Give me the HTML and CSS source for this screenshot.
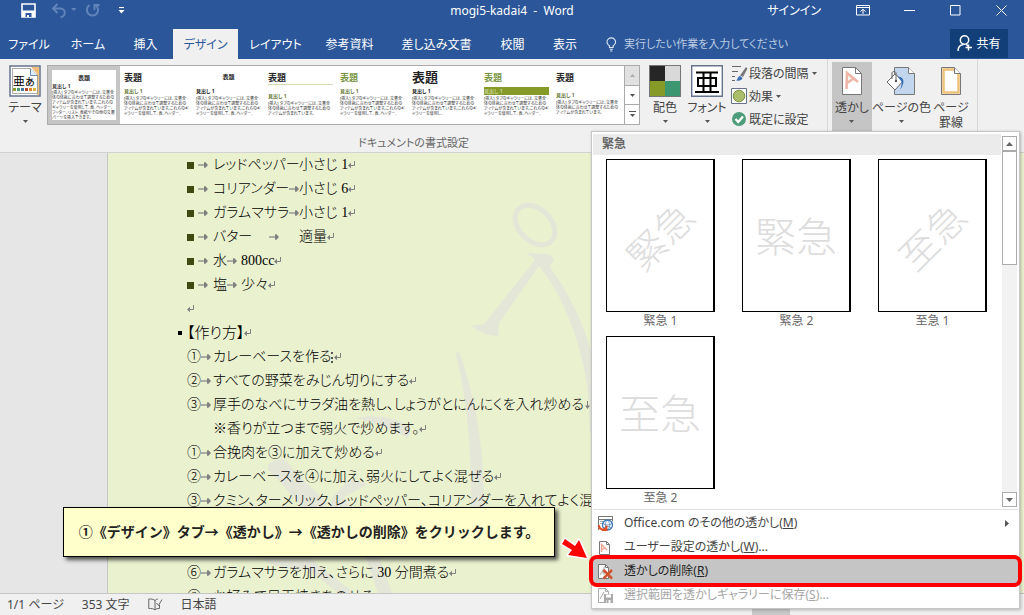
FILE: index.html
```html
<!DOCTYPE html>
<html lang="ja">
<head>
<meta charset="utf-8">
<title>mogi5-kadai4 - Word</title>
<link rel="stylesheet" href="styles.css">
</head>
<body>
<svg class="defs" aria-hidden="true">
  <symbol id="tab" viewBox="0 0 10 8"><path d="M0 4h6" stroke="#808080" stroke-width="1.2" fill="none"/><path d="M6 1.3h1.5L10 4 7.500 6.700H6z" fill="#808080"/></symbol>
  <symbol id="ret" viewBox="0 0 8 10"><path d="M6.500 1v4.500H2" stroke="#808080" fill="none"/><path d="M0 5.500 3 2.800v5.400z" fill="#808080"/></symbol>
  <symbol id="down" viewBox="0 0 8 10"><path d="M3.500 1v6" stroke="#808080" fill="none"/><path d="M1 5.500h5L3.500 9z" fill="#808080"/></symbol>
  <symbol id="caret" viewBox="0 0 5 3"><path d="M0 0h5L2.500 3z" fill="#555"/></symbol>
</svg>
<div class="app">
  <header class="titlebar">
    <div class="quick">
      <button class="ib" aria-label="上書き保存"><svg width="15" height="15" viewBox="0 0 15 15"><path d="M1 1h13v13H1z" fill="none" stroke="#fff" stroke-width="1.600"/><path d="M1 7.500h13V14H1z" fill="#fff"/><path d="M4.500 10h6v4h-6z" fill="#2b579a"/><path d="M6 12h2v2H6z" fill="#fff"/></svg></button>
      <button class="ib undo" aria-label="元に戻す"><svg width="26" height="15" viewBox="0 0 26 15"><path d="M6.500 1 2 5.500 6.500 10M2 5.500h7.500a4 4 0 0 1 0 8.500" fill="none" stroke="#6184bb" stroke-width="2"/><path d="M20 5h5.500l-2.700 3z" fill="#6184bb"/></svg></button>
      <button class="ib" aria-label="やり直し"><svg width="15" height="15" viewBox="0 0 15 15"><path d="M10.500 2.200A5.600 5.600 0 1 1 4.500 2.200M9.500 7V2h5" fill="none" stroke="#6184bb" stroke-width="2"/></svg></button>
      <button class="ib more" aria-label="カスタマイズ"><svg width="7" height="8" viewBox="0 0 7 8"><path d="M1 .500h5" stroke="#fff" stroke-width="1.200"/><path d="M.500 3h6L3.500 6.500z" fill="#fff"/></svg></button>
    </div>
    <h1 class="title">mogi5-kadai4&nbsp; -&nbsp; Word</h1>
    <div class="winctl">
      <button class="signin">サインイン</button>
      <button class="wb" aria-label="リボンの表示オプション"><svg width="14" height="11" viewBox="0 0 14 11"><path d="M.500.500h13v9.500H.500zM.500 2.500h13M7 9V4.500M4.500 6.500 7 4.300l2.500 2.200" fill="none" stroke="#fff"/></svg></button>
      <button class="wb" aria-label="最小化"><svg width="11" height="11" viewBox="0 0 11 11"><path d="M0 5.500h11" stroke="#fff"/></svg></button>
      <button class="wb" aria-label="最大化"><svg width="11" height="11" viewBox="0 0 11 11"><path d="M.500.500h9.500v9.500H.500z" fill="none" stroke="#fff"/></svg></button>
      <button class="wb" aria-label="閉じる"><svg width="11" height="11" viewBox="0 0 11 11"><path d="m.500.500 10 10m0-10-10 10" stroke="#fff"/></svg></button>
    </div>
  </header>

  <nav class="tabs">
    <button class="tab">ファイル</button>
    <button class="tab">ホーム</button>
    <button class="tab">挿入</button>
    <button class="tab active">デザイン</button>
    <button class="tab">レイアウト</button>
    <button class="tab">参考資料</button>
    <button class="tab">差し込み文書</button>
    <button class="tab">校閲</button>
    <button class="tab">表示</button>
    <label class="tell"><svg width="11" height="15" viewBox="0 0 11 15"><path d="M3.500 10.500V9C1.800 7.800 1 6.700 1 5.200a4.300 4.300 0 0 1 8.600 0C9.600 6.700 8.800 7.800 7.100 9v1.500zM3.800 12.200h3M4.200 14h2.200" fill="none" stroke="#dfe8f5" stroke-width="1.100"/></svg><input type="text" aria-label="操作アシスト" placeholder="実行したい作業を入力してください"></label>
    <button class="share"><svg width="16" height="17" viewBox="0 0 16 17"><circle cx="7.500" cy="5" r="4.200" fill="none" stroke="#fff" stroke-width="1.500"/><path d="M1 16c0-4 2-6 5.500-6.500M9 9.500c1.200.400 1.500.700 2 1.500M11.500 9.500v6M8.500 12.500h6.500" fill="none" stroke="#fff" stroke-width="1.500"/></svg>共有</button>
  </nav>

  <section class="ribbon">
    <div class="group fmt">
      <div class="tools">
        <button class="big theme"><svg width="32" height="32" viewBox="0 0 32 32"><path d="M1 1h30v30H1z" fill="#fff" stroke="#66738c" stroke-width="1.500"/><path d="M22 2h8v28h-2V9z" fill="#f0c078"/><path d="M3.500 3.500h18l7 7v18h-25z" fill="#fff" stroke="#888" stroke-width=".700"/><path d="M21.500 3.500v7h7" fill="#e2eefa" stroke="#6c8db8"/><text x="4" y="21" class="themetext">亜ぁ</text><path d="M4 23h3v3H4z" fill="#8a9c2c"/><path d="M8 23h3v3H8z" fill="#4a9a74"/><path d="M12 23h3v3h-3z" fill="#4675a8"/><path d="M16 23h3v3h-3z" fill="#b44a35"/><path d="M20 23h3v3h-3z" fill="#e08a28"/><path d="M24 23h3v3h-3z" fill="#dcb53d"/></svg><span>テーマ</span><svg class="car"><use href="#caret"/></svg></button>
        <div class="gallery">
          <button class="th sel"><span class="sheet"><b class="t center">表題</b><b class="h plain">見出し 1</b><span class="p">[挿入] タブのギャラリーには、文書全体の体裁に合わせて調整するためのアイテムが含まれています。これらのギャラリーを使用して、表、ヘッダー、フッター、リスト、表紙やその他の文書パーツを挿入できます。</span></span></button>
          <button class="th"><b class="t">表題</b><b class="h">見出し 1</b><span class="p">[挿入] タブのギャラリーには、文書全体の体裁に合わせて調整するためのアイテムが含まれています。これらのギャラリーを使用して、表、ヘッダー、</span></button>
          <button class="th"><b class="t small center">表題</b><b class="h black">見出し 1</b><span class="p">[挿入] タブのギャラリーには、文書全体の体裁に合わせて調整するためのアイテムが含まれています。これらのギャラリーを使用して、表、ヘッダー、</span></button>
          <button class="th"><b class="t ruled">表題</b><b class="h low">見出し 1</b><span class="p">[挿入] タブのギャラリーには、文書全体の体裁に合わせて調整するためのアイテムが含まれています。</span></button>
          <button class="th"><b class="t green">表題</b><b class="h">見出し 1</b><span class="p">[挿入] タブのギャラリーには、文書全体の体裁に合わせて調整するためのアイテムが含まれています。これらのギャラリーを使用して、表、ヘッダー、</span></button>
          <button class="th"><b class="t large">表題</b><b class="h black">見出し 1</b><span class="p">[挿入] タブのギャラリーには、文書全体の体裁に合わせて調整するためのアイテムが含まれています。これらのギャラリーを使用し、</span></button>
          <button class="th"><b class="t green">表題</b><b class="h band">見出し 1</b><span class="p">[挿入] タブのギャラリーには、文書全体の体裁に合わせて調整するためのアイテムが含まれています。これらのギャラリーを使用して、表、ヘッダー、</span></button>
          <button class="th"><b class="t">表題</b><b class="h low">見出し 1</b><span class="p">[挿入] タブのギャラリーには、文書全体の体裁に合わせて調整するためのアイテムが含まれています。</span></button>
          <div class="spin">
            <button class="off" aria-label="上へ"><svg width="5" height="3" viewBox="0 0 5 3"><path d="M0 3h5L2.500 0z" fill="#aaa"/></svg></button>
            <button aria-label="下へ"><svg class="car"><use href="#caret"/></svg></button>
            <button aria-label="その他"><svg width="7" height="7" viewBox="0 0 7 7"><path d="M0 .500h7" stroke="#555"/><path d="M1 3h5L3.500 6z" fill="#555"/></svg></button>
          </div>
        </div>
        <button class="big"><svg width="32" height="32" viewBox="0 0 32 32"><path d="M0 0h32v32H0z" fill="#777"/><path d="M1 1h15v15H1z" fill="#262626"/><path d="M16 1h15v15H16z" fill="#d9d9d9"/><path d="M1 16h15v15H1z" fill="#859a27"/><path d="M16 16h15v15H16z" fill="#3c9770"/></svg><span>配色</span><svg class="car"><use href="#caret"/></svg></button>
        <button class="big font"><svg width="32" height="32" viewBox="0 0 32 32"><path d="M.700.700h30.600v30.600H.700z" fill="#fff" stroke="#66738c" stroke-width="1.400"/><path d="M5 7.500h22M4 27h24M12.500 8v19M19.500 8v19M7 13h18v8H7z" fill="none" stroke="#000" stroke-width="2"/></svg><span>フォント</span><svg class="car"><use href="#caret"/></svg></button>
        <div class="stack">
          <button class="row"><svg width="17" height="17" viewBox="0 0 17 17"><path d="M1 1.500h9M1 6.500h6M1 11.500h3M1 15.500h3" stroke="#666"/><path d="M9 10.500 15 2l1.500 1.500L12 12z" fill="#777"/><path d="M5 15.500c2-1 1.500-4 4-4.500l2.500 2c0 2-3 3-6.500 2.500z" fill="#3a6fb5"/></svg><span>段落の間隔</span><svg class="car"><use href="#caret"/></svg></button>
          <button class="row"><svg width="17" height="17" viewBox="0 0 17 17"><path d="M.500.500h15v15H.500z" fill="#fff" stroke="#66738c"/><circle cx="8" cy="8" r="5.800" fill="#a8bf6c" stroke="#7f9643"/></svg><span>効果</span><svg class="car"><use href="#caret"/></svg></button>
          <button class="row"><svg width="17" height="17" viewBox="0 0 17 17"><circle cx="8" cy="8" r="7" fill="#4d9c7c"/><path d="m4.500 8 2.700 3L12 5.500" fill="none" stroke="#fff" stroke-width="2.200"/></svg><span>既定に設定</span></button>
        </div>
      </div>
      <div class="glabel">ドキュメントの書式設定</div>
    </div>
    <div class="group bgs">
      <button class="big pressed"><svg width="32" height="32" viewBox="0 0 32 32"><path d="M6.500 2.500h13l6 6v21h-19z" fill="#fff" stroke="#777"/><path d="M19.500 2.500v6h6" fill="none" stroke="#777"/><path d="M10.500 24 11 8l11 9M11 18l6-4" fill="none" stroke="#efb5a6" stroke-width="2.600"/></svg><span>透かし</span><svg class="car"><use href="#caret"/></svg></button>
      <button class="big wide"><svg width="32" height="32" viewBox="0 0 32 32"><path d="M9.500 2.500h14l6 6v21h-20z" fill="#c2d7ee" stroke="#777"/><path d="M23.500 2.500v6h6" fill="#fff" stroke="#777"/><path d="M2 17 10 9l8 7-8 9z" fill="#fff" stroke="#666"/><path d="M7 14V8c0-2 4-2 4 0v8" fill="none" stroke="#666"/><circle cx="11" cy="16" r="1.200" fill="#555"/><path d="M13 12c4-1 9 4 2 13 2-5 2-8 1-9z" fill="#3b71b4"/></svg><span>ページの色</span><svg class="car"><use href="#caret"/></svg></button>
      <button class="big"><svg width="32" height="32" viewBox="0 0 32 32"><path d="M6.500 2.500h13l6 6v21h-19z" fill="#fff" stroke="#777"/><path d="M19 4.500H8.500v23h15V9" fill="none" stroke="#edc27a" stroke-width="2.500"/><path d="M19.500 2.500v6h6" fill="#fff" stroke="#777"/></svg><span>ページ<br>罫線</span></button>
    </div>
  </section>

  <main class="doc">
    <article class="page">
      <svg class="mark" width="484" height="440" viewBox="108 153 484 440" aria-hidden="true">
        <g fill="#e4e7d8">
          <path d="M526 253l21 1q5 1 7 5l-4 8c18 24 34 57 42 88v80c-4-4-2-20-4-42-6-50-25-98-49-127l-40 57-1 13q-15 0-28-11 7 1 14-1l51-64q-4-4-9-7z"/>
          <path d="M457 351q3 1 5 9c14 43 22 85 22 147h-13c1-60-5-112-15-152z"/>
          <path d="M356 418c19-4 37-1 49 6q9 8 2 14c-15-9-30-14-51-20z"/>
          <path d="M268 465q7-7 18-5l7 9 34 34-7 5h-17l-22-25-13-13z"/><path d="M332 498l17-19 19 5q-11 6-24 13l9 11h-23z"/>
          <path d="M262 559h49l43 34h-16l-30-24q-25 3-46-10z"/><path d="M365 556h14l13 37h-14z"/>
        </g>
        <ellipse cx="535" cy="225" rx="23" ry="16" transform="rotate(45 535 225)" fill="none" stroke="#e4e7d8" stroke-width="5"/>
      </svg>
      <ul class="lines">
        <li><i class="sq"></i><svg class="tb"><use href="#tab"/></svg><span class="body"><span class="c84">レッドペッパー</span>小さじ 1<svg class="rt"><use href="#ret"/></svg></span></li>
        <li><i class="sq"></i><svg class="tb"><use href="#tab"/></svg><span class="body"><span class="c84">コリアンダー<svg class="tb"><use href="#tab"/></svg></span>小さじ 6<svg class="rt"><use href="#ret"/></svg></span></li>
        <li><i class="sq"></i><svg class="tb"><use href="#tab"/></svg><span class="body"><span class="c84">ガラムマサラ<svg class="tb"><use href="#tab"/></svg></span>小さじ 1<svg class="rt"><use href="#ret"/></svg></span></li>
        <li><i class="sq"></i><svg class="tb"><use href="#tab"/></svg><span class="body"><span class="c84 mid">バター<svg class="tb"><use href="#tab"/></svg></span>適量<svg class="rt"><use href="#ret"/></svg></span></li>
        <li><i class="sq"></i><svg class="tb"><use href="#tab"/></svg><span class="body"><span class="c28">水<svg class="tb"><use href="#tab"/></svg></span>800cc<svg class="rt"><use href="#ret"/></svg></span></li>
        <li><i class="sq"></i><svg class="tb"><use href="#tab"/></svg><span class="body"><span class="c28">塩<svg class="tb"><use href="#tab"/></svg></span>少々<svg class="rt"><use href="#ret"/></svg></span></li>
        <li><svg class="rt"><use href="#ret"/></svg></li>
      </ul>
      <h2 class="head"><i class="dot"></i>【作り方】<svg class="rt"><use href="#ret"/></svg></h2>
      <ul class="lines">
        <li><span class="n">①</span><svg class="tb"><use href="#tab"/></svg><span class="body">カレーベースを作る<i class="cur"></i><svg class="rt"><use href="#ret"/></svg></span></li>
        <li><span class="n">②</span><svg class="tb"><use href="#tab"/></svg><span class="body">すべての野菜をみじん切りにする<svg class="rt"><use href="#ret"/></svg></span></li>
        <li><span class="n">③</span><svg class="tb"><use href="#tab"/></svg><span class="body">厚手のなべにサラダ油を熱し、しょうがとにんにくを入れ炒める<svg class="rt"><use href="#down"/></svg></span></li>
        <li class="cont"><span class="body">※香りが立つまで弱火で炒めます。<svg class="rt"><use href="#ret"/></svg></span></li>
        <li><span class="n">①</span><svg class="tb"><use href="#tab"/></svg><span class="body">合挽肉を③に加えて炒める<svg class="rt"><use href="#ret"/></svg></span></li>
        <li><span class="n">②</span><svg class="tb"><use href="#tab"/></svg><span class="body">カレーベースを④に加え、弱火にしてよく混ぜる<svg class="rt"><use href="#ret"/></svg></span></li>
        <li><span class="n">③</span><svg class="tb"><use href="#tab"/></svg><span class="body">クミン、ターメリック、レッドペッパー、コリアンダーを入れてよく混ぜ</span></li>
        <li></li>
        <li></li>
        <li><span class="n">⑥</span><svg class="tb"><use href="#tab"/></svg><span class="body">ガラムマサラを加え、さらに 30 分間煮る<svg class="rt"><use href="#ret"/></svg></span></li>
        <li><span class="n">⑧</span><svg class="tb"><use href="#tab"/></svg><span class="body">お好みで目玉焼きをのせる</span></li>
      </ul>
    </article>
  </main>

  <footer class="status">
    <span>1/1 ページ</span><span>353 文字</span>
    <svg width="15" height="13" viewBox="0 0 15 13"><path d="M7 2v10M7 2.500C5.500 1 3 1 .800 1v9.500c2.500 0 5 0 6.200 1.500 1-1.300 2.500-1.500 4.500-1.500V7M7 2.500C8 1.500 9 1.200 10 1M8.500 5l2 2.500L14 1.500" fill="none" stroke="#666"/></svg>
    <span>日本語</span>
    <i class="viewbtn"></i>
  </footer>
</div>

<section class="menu">
  <div class="scroller">
    <div class="pane">
      <h3 class="mh">緊急</h3>
      <div class="cards">
        <button class="card"><span class="paper"><span class="wm tilt">緊急</span></span>緊急 1</button>
        <button class="card"><span class="paper"><span class="wm">緊急</span></span>緊急 2</button>
        <button class="card"><span class="paper"><span class="wm tilt">至急</span></span>至急 1</button>
        <button class="card"><span class="paper"><span class="wm">至急</span></span>至急 2</button>
      </div>
    </div>
    <div class="bar">
      <button aria-label="上へスクロール"><svg width="7" height="4" viewBox="0 0 7 4"><path d="M0 4h7L3.500 0z" fill="#666"/></svg></button>
      <div class="thumb"></div>
      <button class="last" aria-label="下へスクロール"><svg width="7" height="4" viewBox="0 0 7 4"><path d="M0 0h7L3.500 4z" fill="#666"/></svg></button>
    </div>
  </div>
  <div class="items">
    <button class="mi"><svg width="17" height="17" viewBox="0 0 17 17"><path d="M1.500 15V1.500h14v5M1.500 4.500h14" fill="none" stroke="#777"/><path d="M3 6.500h4M3 8.500h3" stroke="#aaa"/><circle cx="10.500" cy="10" r="5" fill="#fff" stroke="#3c77b8" stroke-width="1.300"/><path d="M6 8.500c3 2 6 2 9 0M7 13c2-2 5-2 7 0M10.500 5c-3 3-3 7 0 10M10.500 5c3 3 3 7 0 10" fill="none" stroke="#3c77b8" stroke-width=".700"/><path d="M2 10c0 5 4 5.500 7 3M9.500 10.500v4.500H5" fill="none" stroke="#e0532b" stroke-width="2"/></svg><span>Office.com のその他の透かし(<u>M</u>)</span><svg class="sub" width="4" height="7" viewBox="0 0 4 7"><path d="M0 0v7l4-3.500z" fill="#555"/></svg></button>
    <button class="mi"><svg width="17" height="17" viewBox="0 0 17 17"><path d="M2.500 2.500h7l3 3v10h-10z" fill="#fff" stroke="#777"/><path d="M9.500 2.500v3h3" fill="none" stroke="#777"/><path d="M4.500 13V5.500L10 11M4.500 11 8 8.500" fill="none" stroke="#eda493" stroke-width="1.400"/></svg><span>ユーザー設定の透かし(<u>W</u>)...</span></button>
    <button class="mi hot"><svg width="17" height="17" viewBox="0 0 17 17"><path d="M1.500 1.500h7l3 3v11h-10z" fill="#fff" stroke="#777"/><path d="M8.500 1.500v3h3" fill="none" stroke="#777"/><path d="m3 12 4-7v7M4.500 9.500H7" fill="none" stroke="#bbb" stroke-width="1.300"/><path d="m6.500 7 8.500 8.500M15 7l-8.500 8.500" stroke="#d0552f" stroke-width="2.500"/></svg><span>透かしの削除(<u>R</u>)</span></button>
    <button class="mi" disabled><svg width="17" height="17" viewBox="0 0 17 17"><path d="M1.500 1.500h7l3 3v11h-10z" fill="#fff" stroke="#aaa"/><path d="M8.500 1.500v3h3M3 12l4-7" fill="none" stroke="#aaa"/><path d="M7 7h9v9H7z" fill="#aaa"/><path d="M9 7.500h5v3H9zM9.500 13h4v3h-4z" fill="#fff"/><path d="M10 13h1.500v3H10z" fill="#aaa"/></svg><span>選択範囲を透かしギャラリーに保存(<u>S</u>)...</span></button>
  </div>
  <div class="ring"></div>
</section>

<aside class="callout">①《デザイン》タブ→《透かし》→《透かしの削除》をクリックします。</aside>
<svg class="pointer" width="30" height="26" viewBox="0 0 30 26" aria-hidden="true"><path d="M5 4 15 11l4-6 8 18-19-3 4-5L2 9z" fill="#f00" stroke="#fff" stroke-width="3" paint-order="stroke" stroke-linejoin="round"/></svg>
</body>
</html>
```

FILE: styles.css
```css
* { box-sizing: border-box; }
html, body { height: 100%; }
body {
  margin: 0;
  overflow: hidden;
  font: 12px/16px "Noto Sans", "Noto Sans CJK JP", sans-serif;
  font-feature-settings: "palt";
  color: #444;
}
button {
  font: inherit;
  font-feature-settings: inherit;
  color: inherit;
  background: none;
  border: 0;
  padding: 0;
  margin: 0;
  white-space: nowrap;
}
svg { display: block; flex: none; }
i { flex: none; }
.defs { position: absolute; width: 0; height: 0; }
.app { display: flex; flex-direction: column; height: 100vh; min-height: 600px; background: #f0f0f0; }

/* title bar */
.titlebar {
  display: grid;
  grid-template-columns: 1fr auto 1fr;
  align-items: center;
  height: 29px;
  padding-bottom: 8px;
  background: #2b579a;
  color: #fff;
}
.quick { display: flex; align-items: center; padding-left: 21px; }
.undo { margin-left: 15px; }
.undo + .ib { margin-left: 8px; }
.more { margin-left: 18px; }
.title { margin: 0; font-size: 12px; font-weight: 400; }
.winctl { display: flex; justify-content: flex-end; align-items: center; }
.signin { margin-right: 19px; }
.wb { display: grid; place-items: center; width: 46px; height: 20px; }

/* tabs */
.tabs {
  display: grid;
  grid-template-columns: 58px 60px 55px 65px 75px 73px 101px 51px 54px 1fr 58px;
  height: 30px;
  padding-right: 16px;
  background: #2b579a;
  color: #fff;
}
.tab { padding-top: 2px; }
.tab.active { background: #f0f0f0; color: #2b579a; }
.tell { display: flex; align-items: center; gap: 7px; padding-left: 14px; font-size: 11px; }
.tell input {
  flex: 1;
  min-width: 0;
  padding: 0;
  border: 0;
  outline: 0;
  background: none;
  font: inherit;
  font-feature-settings: inherit;
}
.tell input::placeholder { color: #bccbe2; opacity: 1; }
.share {
  display: flex;
  align-items: center;
  justify-content: center;
  gap: 3px;
  height: 29px;
  background: #123f78;
}

/* ribbon */
.ribbon { display: flex; height: 94px; border-bottom: 1px solid #d2d2d2; }
.group { border-right: 1px solid #d8d8d8; margin-bottom: 2px; }
.fmt { width: 828px; display: flex; flex-direction: column; justify-content: space-between; }
.tools { display: flex; align-items: flex-start; height: 76px; padding: 6px 0 0 4px; }
.glabel { font-size: 11px; line-height: 15px; text-align: center; color: #666; }
.big { display: flex; flex-direction: column; align-items: center; width: 42px; }
.big span { margin-top: 3px; line-height: 15px; }
.car { width: 5px; height: 3px; }
.big .car { margin-top: 5px; }
.themetext { font-size: 12px; }
.gallery { display: flex; height: 60px; margin: 0 4px 0 1px; background: #fff; border: 1px solid #ababab; }
.th {
  display: flex;
  flex-direction: column;
  width: 72px;
  height: 58px;
  padding: 5px 3px 0 4px;
  overflow: hidden;
  text-align: left;
  white-space: normal;
  color: #333;
}
.th.sel { padding: 4px; background: #c5c5c5; }
.sheet { display: flex; flex-direction: column; height: 50px; padding: 4px 0 0; background: #fff; overflow: hidden; }
.t { font-size: 9px; line-height: 13px; color: #222; }
.sel .t { font-size: 6px; line-height: 9px; }
.t.small { font-size: 6px; }
.t.large { font-size: 13px; }
.t.green { color: #76923c; }
.t.ruled { border-bottom: 1px solid #d3dbb4; }
.center { align-self: center; }
.h { margin-top: 3px; font-size: 5px; line-height: 8px; color: #5f7530; }
.h.plain { margin: 0; line-height: 7px; color: #333; }
.h.black { color: #111; }
.h.low { margin-top: 7px; }
.h.band { background: #859a27; color: #c8d49a; }
.p { margin-top: 1px; font-size: 4px; line-height: 5px; }
.sel .p { margin-top: 0; }
.spin { display: flex; flex-direction: column; width: 15px; border-left: 1px solid #ababab; }
.spin button { flex: 1; display: grid; place-items: center; }
.spin button + button { border-top: 1px solid #ababab; }
.spin .off { background: #e1e1e1; }
.stack { display: flex; flex-direction: column; gap: 6px; margin-left: 3px; }
.row { display: flex; align-items: center; gap: 1px; height: 17px; }
.row .car { margin-left: 2px; }
.bgs { display: flex; padding: 3px 6px 0 4px; width: 150px; }
.bgs .big { height: 70px; padding-top: 3px; }
.bgs .wide { width: 60px; }
.bgs .pressed { background: #c5c5c5; }

/* document */
.doc { flex: 1; min-height: 0; padding-left: 107px; background: #e6e6e6; overflow: hidden; }
.page {
  position: relative;
  height: 100%;
  padding-left: 70px;
  border-left: 1px solid #c6c6c6;
  background: #eaf1cf;
  color: #000;
  font-family: "Liberation Serif", "Noto Sans CJK JP", serif;
  font-size: 14px;
  font-weight: 300;
  white-space: nowrap;
  overflow: hidden;
}
.mark { position: absolute; left: 0; top: 0; }
.lines { position: relative; list-style: none; margin: 0; padding: 0 0 0 9px; }
.lines li { display: flex; align-items: center; height: 24px; line-height: 22px; }
.sq { width: 7px; height: 7px; margin-right: 4px; background: #3f4a12; }
.n { width: 14px; }
.tb { width: 10px; height: 8px; }
.rt { width: 8px; height: 10px; }
.body { display: flex; align-items: center; margin-left: 5px; white-space: pre; }
.n + .tb + .body { margin-left: 2px; }
.cont { padding-left: 21px; }
.c84, .c28 { display: flex; align-items: center; }
.c84 { width: 86px; }
.c28 { width: 28px; }
.mid { justify-content: space-between; padding-right: 20px; }
.head { position: relative; display: flex; align-items: center; height: 24px; margin: 0; font-size: 15px; font-weight: 300; line-height: 22px; }
.dot { width: 4px; height: 4px; margin-right: 5px; background: #000; }
.cur { width: 3px; height: 11px; border-left: 2px dotted #555; }

/* status bar */
.status {
  display: flex;
  align-items: center;
  gap: 18px;
  height: 22px;
  padding-left: 7px;
  border-top: 1px solid #c6c6c6;
  background: #f0f0f0;
}
.viewbtn { width: 38px; height: 21px; margin: 0 234px 0 auto; background: #c8c8c8; }

/* watermark menu */
.menu {
  position: absolute;
  left: 591px;
  top: 131px;
  width: 429px;
  padding: 2px 1px 1px;
  background: #fff;
  border: 1px solid #c6c6c6;
  box-shadow: 1px 1px 3px rgba(0, 0, 0, .25);
}
.scroller { display: flex; height: 376px; border-bottom: 1px solid #e1e1e1; }
.pane { flex: 1; }
.mh { margin: 0; padding: 0 9px; height: 21px; font-size: 12px; line-height: 20px; color: #666; background: #ebebeb; }
.cards { display: grid; grid-template-columns: repeat(3, 109px); gap: 6px 27px; padding: 4px 13px; }
.card { display: flex; flex-direction: column; align-items: center; color: #666; line-height: 18px; }
.paper { display: grid; place-items: center; width: 109px; height: 153px; border: 1px solid #000; border-right-width: 2px; }
.wm { font-size: 41px; line-height: 50px; font-weight: 300; color: #ddd; font-feature-settings: normal; }
.tilt { font-size: 38px; transform: rotate(-45deg); }
.bar { display: flex; flex-direction: column; width: 15px; margin: 2px 1px 2px 1px; background: #f2f2f2; }
.bar button { display: grid; place-items: center; height: 15px; background: #fff; border: 1px solid #ababab; }
.thumb { height: 114px; background: #fff; border: 1px solid #ababab; }
.bar .last { margin-top: auto; }
.items { display: flex; flex-direction: column; padding-top: 1px; }
.mi { display: flex; align-items: center; gap: 10px; height: 24px; padding: 0 9px 0 4px; }
.mi.hot { background: #c5c5c5; color: #222; }
.mi:disabled { color: #a6a6a6; }
.sub { margin-left: auto; }
.ring { position: absolute; left: -3px; right: -3px; bottom: 21px; height: 32px; border: 4px solid #f00; border-radius: 8px; }

/* instruction */
.callout {
  position: absolute;
  left: 63px;
  top: 507px;
  width: 492px;
  height: 50px;
  border: 1px solid #000;
  background: #ffc;
  box-shadow: 3px 3px 4px rgba(0, 0, 0, .65);
  color: #222;
  font-size: 14px;
  font-weight: 700;
  font-feature-settings: normal;
  line-height: 48px;
  text-align: center;
  white-space: nowrap;
}
.pointer { position: absolute; left: 560px; top: 535px; }
```
